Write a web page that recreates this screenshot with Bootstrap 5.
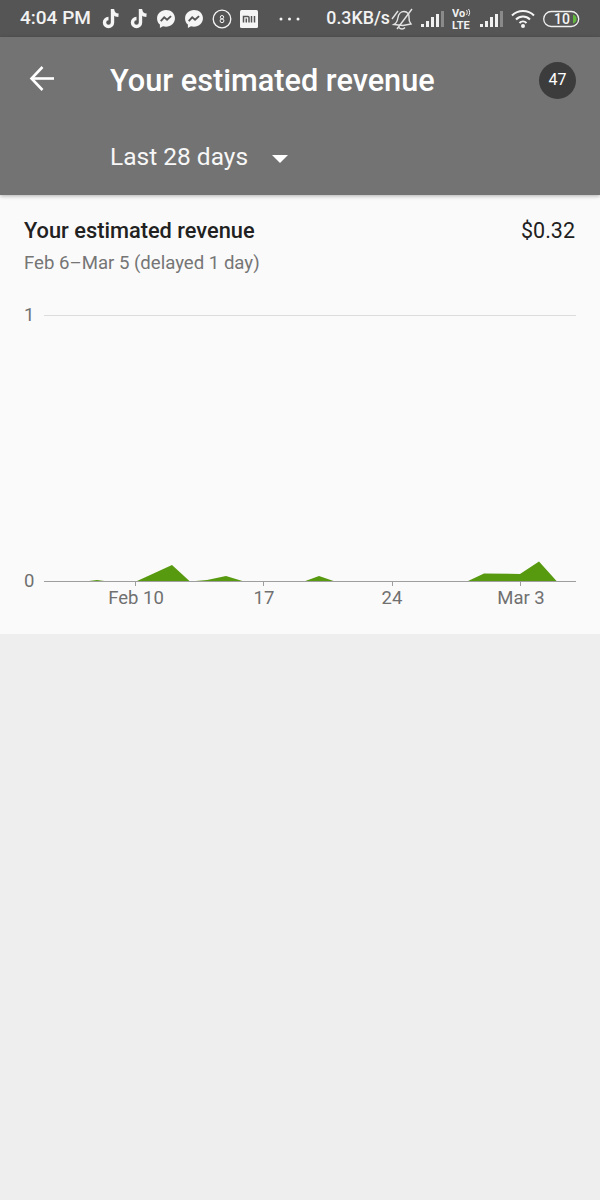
<!DOCTYPE html>
<html lang="en">
<head>
    <meta charset="UTF-8">
    <meta name="viewport" content="width=device-width, initial-scale=1.0">
    <title>Your estimated revenue</title>
    <link href="https://cdn.jsdelivr.net/npm/bootstrap@5.3.0/dist/css/bootstrap.min.css" rel="stylesheet">
    <style>
        body { background: #eeeeee; font-family: Roboto, "Liberation Sans", sans-serif; }
        .status-strip { height: 37px; background: #555555; color: #f2f2f2; padding: 0 20px; }
        .status-time { font-size: 19px; font-weight: 500; width: 72px; white-space: nowrap; }
        .status-speed { font-size: 17.8px; font-weight: 500; white-space: nowrap; margin-right: 1px; }
        .status-strip svg { display: block; flex: none; }
        .status-dots { margin-left: 21px; }
        .head-panel { height: 158px; background: #737373; color: #fff; box-shadow: 0 1px 4px rgba(0,0,0,.3); position: relative; z-index: 1; }
        .head-top { height: 86px; padding: 0 24px 0 29px; }
        .head-back { margin-bottom: 4px; }
        .head-title { font-size: 30.7px; font-weight: 500; margin-left: 55px; line-height: 1; padding-top: 2px; }
        .count-dot { width: 37px; height: 37px; background: #3c3c3c; font-size: 16px; margin-left: auto; }
        .range-pick { padding-left: 110px; padding-top: 22px; font-size: 24.500px; line-height: 1; color: #f7f7f7; }
        .range-caret { width: 0; height: 0; border-left: 8px solid transparent; border-right: 8px solid transparent; border-top: 8px solid #fff; margin-left: 24px; margin-top: 4px; }
        .revenue-panel { height: 439px; background: #fafafa; border-radius: 0; border: 0; }
        .revenue-head { padding: 23px 25px 0 24px; }
        .revenue-title { font-size: 21.800px; font-weight: 500; color: #212121; line-height: 26px; }
        .revenue-sum { font-size: 21.500px; color: #212121; line-height: 26px; }
        .revenue-sub { font-size: 18.600px; color: #757575; line-height: 24px; margin-top: 7px; }
        .chart-box { display: block; }
        .chart-box text { font-family: Roboto, "Liberation Sans", sans-serif; font-size: 18.500px; fill: #707070; }
    </style>
</head>
<body>
    <div class="status-strip d-flex align-items-center">
        <span class="status-time">4:04 PM</span>
        <svg class="ms-2" width="20" height="22" viewBox="-2 0 20 22" fill="none" stroke="#f5f5f5" stroke-width="3.4"><path d="M10.5 1v13.5a4 4 0 1 1-4-4"/><path d="M10.5 2c.4 3 2.500 5 6 5.300"/></svg>
        <svg class="ms-2" width="20" height="22" viewBox="-2 0 20 22" fill="none" stroke="#f5f5f5" stroke-width="3.4"><path d="M10.5 1v13.500a4 4 0 1 1-4-4"/><path d="M10.500 2c.4 3 2.500 5 6 5.300"/></svg>
        <svg class="ms-2" width="20" height="20" viewBox="0 0 19 19"><path fill="#f5f5f5" d="M9.500 1C4.700 1 1 4.500 1 9c0 2.400 1 4.400 2.700 5.800V18l2.900-1.600c.9.300 1.900.4 2.900.4 4.800 0 8.500-3.500 8.500-8S14.300 1 9.500 1z"/><path fill="none" stroke="#555" stroke-width="1.800" d="M4.500 11.500l3.300-3.600 2.700 2.300 3.800-3.400"/></svg>
        <svg class="ms-2" width="20" height="20" viewBox="0 0 19 19"><path fill="#f5f5f5" d="M9.500 1C4.700 1 1 4.500 1 9c0 2.400 1 4.400 2.700 5.800V18l2.900-1.600c.9.300 1.900.4 2.900.4 4.800 0 8.500-3.500 8.500-8S14.300 1 9.500 1z"/><path fill="none" stroke="#555" stroke-width="1.800" d="M4.500 11.500l3.300-3.600 2.700 2.300 3.800-3.400"/></svg>
        <svg class="ms-2" width="20" height="20" viewBox="0 0 20 20" fill="none" stroke="#f5f5f5"><circle cx="10" cy="10" r="8.800" stroke-width="1.300"/><circle cx="10" cy="8.200" r="1.700" stroke-width="1"/><circle cx="10" cy="11.800" r="1.900" stroke-width="1"/></svg>
        <svg class="ms-2" width="18" height="18" viewBox="0 0 18 18"><rect width="18" height="18" rx="1.500" fill="#f5f5f5"/><path fill="none" stroke="#555" stroke-width="1.500" d="M3.500 12.500V6.500h4.500a1 1 0 0 1 1 1v5M6.300 8.500v4M11.500 6v6.500M14.500 6v6.500"/></svg>
        <svg class="status-dots" width="21" height="4" viewBox="0 0 21 4" fill="#f5f5f5"><circle cx="2" cy="2" r="1.500"/><circle cx="10.500" cy="2" r="1.500"/><circle cx="19" cy="2" r="1.500"/></svg>
        <span class="status-speed ms-auto">0.3KB/s</span>
        <svg width="22" height="24" viewBox="0 0 22 24" fill="none" stroke="#e4e4e4" stroke-width="1.400"><path d="M3 17.500c2-1 3.500-4 4-7 .5-3.500 3-6 6-6 3.500 0 5.500 3 5 6-.3 2.500.5 4.500 2 6.500l-8 1.500z"/><path d="M8 20.500c1.500 2 4.500 2 6 0"/><path d="M6 22L21 2"/><path d="M1 12l6-8"/></svg>
        <svg class="ms-2" width="23" height="18" viewBox="0 0 23 18" fill="#f0f0f0"><rect x="0" y="14" width="3" height="3"/><rect x="5" y="11" width="3" height="6"/><rect x="10" y="7" width="3" height="10"/><rect x="15" y="4" width="3" height="13"/><rect x="20" y="1" width="3" height="16" fill="#8a8a8a"/></svg>
        <svg class="ms-2" width="20" height="24" viewBox="0 0 20 24" fill="none" stroke="#f0f0f0" stroke-width="1"><text x="0" y="10" font-size="11" font-weight="700" fill="#f0f0f0" stroke="none" font-family="Roboto">Vo</text><path d="M14.500 3c1 1.300 1 3.500 0 5M16.500 2c1.500 2 1.500 5 0 7"/><text x="0" y="22" font-size="11" font-weight="700" fill="#f0f0f0" stroke="none" font-family="Roboto">LTE</text></svg>
        <svg class="ms-2" width="23" height="18" viewBox="0 0 23 18" fill="#f0f0f0"><rect x="0" y="14" width="3" height="3"/><rect x="5" y="11" width="3" height="6"/><rect x="10" y="7" width="3" height="10"/><rect x="15" y="4" width="3" height="13"/><rect x="20" y="1" width="3" height="16" fill="#8a8a8a"/></svg>
        <svg class="ms-2" width="24" height="19" viewBox="0 0 24 19" fill="none" stroke="#f5f5f5" stroke-width="2"><path d="M1 6.500c6-6 16-6 22 0"/><path d="M5 10.500c4-4 10-4 14 0"/><path d="M8.500 14c2-2 5-2 7 0"/><circle cx="12" cy="17" r="1" fill="#f5f5f5"/></svg>
        <svg class="ms-2" width="37" height="18" viewBox="0 0 37 18"><rect x=".7" y="1.500" width="35" height="15" rx="7.500" fill="none" stroke="#f0f0f0" stroke-width="1.300"/><path d="M30 4.500c2.500.5 3.500 2.500 3.500 4.500s-1 4-3.500 4.500z" fill="#62b83d"/><text x="11" y="14" font-size="14" font-weight="500" fill="#f5f5f5" font-family="Roboto">10</text></svg>
    </div>

    <div class="head-panel">
        <div class="head-top d-flex align-items-center">
            <svg class="head-back" width="26" height="26" viewBox="0 0 26 26" fill="none" stroke="#fff" stroke-width="2.600"><path d="M25 13.500H2.500"/><path d="M13.500 2L2.500 13.500 13.500 25"/></svg>
            <span class="head-title">Your estimated revenue</span>
            <span class="count-dot rounded-circle d-flex align-items-center justify-content-center">47</span>
        </div>
        <div class="range-pick d-flex align-items-center">
            <span>Last 28 days</span>
            <span class="range-caret"></span>
        </div>
    </div>

    <div class="card revenue-panel">
        <div class="revenue-head">
            <div class="d-flex justify-content-between">
                <span class="revenue-title">Your estimated revenue</span>
                <span class="revenue-sum">$0.32</span>
            </div>
            <div class="revenue-sub">Feb 6–Mar 5 (delayed 1 day)</div>
        </div>
        <!-- svg origin sits at y=275 on the page -->
        <svg class="chart-box" width="600" height="359" viewBox="0 275 600 359">
            <line x1="44" y1="315.500" x2="576" y2="315.500" stroke="#dcdcdc"/>
            <text x="24" y="321">1</text>
            <text x="24" y="587">0</text>
            <polygon fill="#57990f" points="85,581.500 97,580 108,581.500"/>
            <polygon fill="#57990f" points="136,581.500 172,565 190,581.500"/>
            <polygon fill="#57990f" points="190,581.500 207,580 226,576 244,581.500"/>
            <polygon fill="#57990f" points="304,581.500 319,576 335,581.500"/>
            <polygon fill="#57990f" points="467,581.500 484,573.500 520,574 539,561.500 557,581.500"/>
            <line x1="44" y1="581.500" x2="576" y2="581.500" stroke="#9e9e9e"/>
            <g stroke="#9e9e9e">
                <line x1="135.500" y1="582" x2="135.500" y2="586"/>
                <line x1="263.500" y1="582" x2="263.500" y2="586"/>
                <line x1="392.500" y1="582" x2="392.500" y2="586"/>
                <line x1="520.500" y1="582" x2="520.500" y2="586"/>
            </g>
            <g text-anchor="middle">
                <text x="136" y="604">Feb 10</text>
                <text x="264" y="604">17</text>
                <text x="392" y="604">24</text>
                <text x="521" y="604">Mar 3</text>
            </g>
        </svg>
    </div>

    <script src="https://cdn.jsdelivr.net/npm/bootstrap@5.3.0/dist/js/bootstrap.bundle.min.js"></script>
</body>
</html>
